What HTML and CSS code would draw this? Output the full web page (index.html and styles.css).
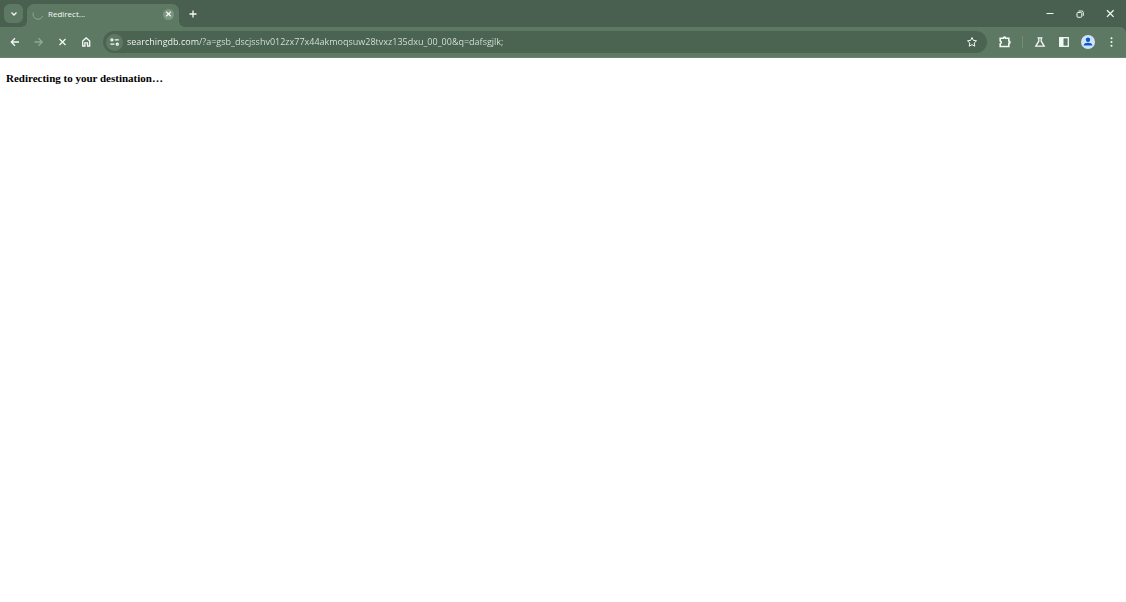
FILE: index.html
```html
<!DOCTYPE html>
<html lang="en">
<head>
<meta charset="utf-8">
<title>Redirect...</title>
<link rel="stylesheet" href="styles.css">
</head>
<body>
<header class="browser">
  <div class="tabstrip">
    <button class="tab-search" aria-label="Search tabs"><svg class="icon" viewBox="0 0 12 12"><path d="M3.500 4.500 6 7 8.500 4.500"/></svg></button>
    <div class="tab">
      <svg class="spinner" viewBox="0 0 12 12"><path d="M1.300 4.500A5 5 0 0 0 10.700 8"/></svg>
      <span class="tab-title">Redirect...</span>
      <button class="tab-close" aria-label="Close tab"><svg class="icon" viewBox="0 0 12 12"><path d="m3.500 3.500 5 5m0-5-5 5"/></svg></button>
    </div>
    <button class="new-tab" aria-label="New tab"><svg class="icon" viewBox="0 0 12 12"><path d="M6 2.500v7M2.500 6h7"/></svg></button>
    <div class="window-controls">
      <button class="window-button" aria-label="Minimize"><svg class="icon thin" viewBox="0 0 12 12"><path d="M2.500 5.500h7"/></svg></button>
      <button class="window-button" aria-label="Restore"><svg class="icon thin" viewBox="0 0 12 12"><rect x="3" y="4.500" width="4.800" height="4.800" rx="1"/><path d="M4.500 3h3.300a1.500 1.500 0 0 1 1.500 1.500v3.300"/></svg></button>
      <button class="window-button" aria-label="Close"><svg class="icon" viewBox="0 0 12 12"><path d="m3 2.300 6.600 6.600m0-6.600L3 8.900"/></svg></button>
    </div>
  </div>
  <div class="toolbar">
    <nav class="nav">
      <button class="tool" aria-label="Back"><svg class="icon" viewBox="0 0 12 12"><path d="M10 6H2.500M6 2.300 2.300 6 6 9.700"/></svg></button>
      <button class="tool" aria-label="Forward" disabled><svg class="icon" viewBox="0 0 12 12"><path d="M1.500 6H9M5.500 2.300 9.200 6 5.500 9.700"/></svg></button>
      <button class="tool" aria-label="Stop loading"><svg class="icon" viewBox="0 0 12 12"><path d="m2.500 3 6 6m0-6-6 6"/></svg></button>
      <button class="tool" aria-label="Home"><svg class="icon" viewBox="0 0 12 12"><path d="M1.700 5 5.200 1.900 8.700 5v5H6.500V6.800H3.900V10H1.700z"/></svg></button>
    </nav>
    <form class="address">
      <button type="button" class="site-info" aria-label="View site information"><svg class="icon" viewBox="0 0 12 12"><circle cx="2.900" cy="3.800" r="1"/><path d="M5.800 3.800h4M1.400 8.200h4"/><circle cx="8.300" cy="8.200" r="1"/></svg></button>
      <input class="url" type="text" aria-label="Address and search bar" spellcheck="false" value="searchingdb.com/?a=gsb_dscjsshv012zx77x44akmoqsuw28tvxz135dxu_00_00&amp;q=dafsgjlk;">
      <button type="button" class="bookmark" aria-label="Bookmark this tab"><svg class="icon thin" viewBox="0 0 12 12"><path d="m6 1.500 1.350 2.900 3.150.4-2.300 2.200.6 3.200L6 8.650 3.200 10.200l.6-3.200-2.300-2.200 3.150-.4z"/></svg></button>
    </form>
    <div class="actions">
      <button class="tool" aria-label="Extensions"><svg class="icon bold" viewBox="0 0 12 12"><path d="M1.200 2.200h3.200a1.100 1.100 0 0 1 2.200 0h3.200v2.800a1.200 1.200 0 0 1 0 2.400v3.100H1.200V7.800a1.500 1.500 0 0 0 0-2.900z"/></svg></button>
      <span class="divider"></span>
      <button class="tool" aria-label="Experiments"><svg class="icon" viewBox="0 0 12 12"><path d="M3.500 1.800h5M4.800 2v3.200L1.800 10.200h8.400L7.200 5.200V2"/></svg></button>
      <button class="tool" aria-label="Side panel"><svg class="icon" viewBox="0 0 12 12"><rect x="1.700" y="1.700" width="8.600" height="8.600"/><path class="solid" d="M1.700 1.700H5.500v8.600H1.700z"/></svg></button>
      <button class="tool" aria-label="Profile"><svg class="avatar" viewBox="0 0 14 14"><circle cx="7" cy="7" r="7" fill="#d3e3fd"/><circle cx="7" cy="4.700" r="2.200" fill="#0b57d0"/><path d="M2.800 10.600V9.800C2.800 7 11.200 7 11.200 9.800v.8z" fill="#0b57d0"/></svg></button>
      <button class="tool" aria-label="Menu"><svg class="icon" viewBox="0 0 12 12"><g class="dots"><circle cx="5.500" cy="2.300" r="1"/><circle cx="5.500" cy="6" r="1"/><circle cx="5.500" cy="9.700" r="1"/></g></svg></button>
    </div>
  </div>
</header>
<main class="page">
  <h1 class="message">Redirecting to your destination…</h1>
</main>
</body>
</html>
```
FILE: styles.css
```css
* {
  box-sizing: border-box;
}

body {
  margin: 0;
  background: #fff;
}

button {
  display: flex;
  flex: none;
  align-items: center;
  justify-content: center;
  padding: 0;
  border: 0;
  background: none;
  color: inherit;
}

.browser {
  background: #496050;
  color: #f3f8f4;
  font-family: "Open Sans", "Noto Sans", sans-serif;
}

.tabstrip {
  display: flex;
  align-items: flex-start;
  height: 27px;
  padding: 4px 1px 0 4px;
}

.icon {
  width: 12px;
  height: 12px;
  fill: none;
  stroke: currentColor;
  stroke-width: 1.3;
}

.thin {
  stroke-width: 1;
}

.bold {
  stroke-width: 1.6;
}

.tab-search {
  width: 19px;
  height: 19px;
  border-radius: 6px;
  background: #5d7964;
}

.tab {
  position: relative;
  display: flex;
  align-items: center;
  width: 152px;
  height: 23px;
  margin-left: 4px;
  padding: 0 5px 3px;
  border-radius: 7px 7px 0 0;
  background: #5d7964;
}

.tab::before,
.tab::after {
  position: absolute;
  bottom: 0;
  width: 6px;
  height: 6px;
  content: "";
}

.tab::before {
  right: 100%;
  background: radial-gradient(circle at 0 0, transparent 6px, #5d7964 6px);
}

.tab::after {
  left: 100%;
  background: radial-gradient(circle at 100% 0, transparent 6px, #5d7964 6px);
}

.spinner {
  width: 12px;
  height: 12px;
  fill: none;
  stroke: #8fa795;
  stroke-width: 1;
}

.tab-title {
  flex: 1;
  margin-left: 4px;
  font-size: 8px;
  line-height: 12px;
}

.tab-close {
  width: 11px;
  height: 11px;
  border-radius: 50%;
  background: #7c9582;
}

.new-tab {
  width: 19px;
  height: 19px;
  margin-left: 4px;
}

.window-controls {
  display: flex;
  margin-left: auto;
}

.window-button {
  width: 30px;
  height: 19px;
}

.toolbar {
  display: flex;
  align-items: center;
  height: 31px;
  padding: 0 2px 0 3px;
  border-radius: 0 6px 0 0;
  border-bottom: 1px solid #6b8571;
  background: #5d7964;
}

.nav,
.actions {
  display: flex;
  flex: none;
  align-items: center;
}

.tool {
  width: 24px;
  height: 24px;
}

.tool:disabled {
  color: #91a896;
}

.address {
  display: flex;
  flex: 1;
  align-items: center;
  min-width: 0;
  height: 22px;
  margin: 0 6px 0 4px;
  padding: 0 7px 0 3px;
  border-radius: 11px;
  background: #4b6452;
}

.site-info {
  width: 17px;
  height: 17px;
  border-radius: 50%;
  background: #5d7964;
}

.url {
  flex: 1;
  min-width: 0;
  height: 18px;
  margin-left: 4px;
  padding: 0;
  border: 0;
  outline: 0;
  background: linear-gradient(90deg, #fff 71px, #dde7df 71px);
  background-clip: text;
  color: transparent;
  font: 9px/18px "Open Sans", "Noto Sans", sans-serif;
}

.bookmark {
  width: 16px;
  height: 16px;
}

.divider {
  width: 1px;
  height: 12px;
  margin: 0 5px;
  background: #728d77;
}

.avatar {
  width: 14px;
  height: 14px;
}

.dots,
.solid {
  fill: currentColor;
  stroke: none;
}

.page {
  padding: 13px 6px;
}

.message {
  margin: 0;
  color: #000;
  font: bold 11px/14px "Liberation Serif", serif;
}
```
